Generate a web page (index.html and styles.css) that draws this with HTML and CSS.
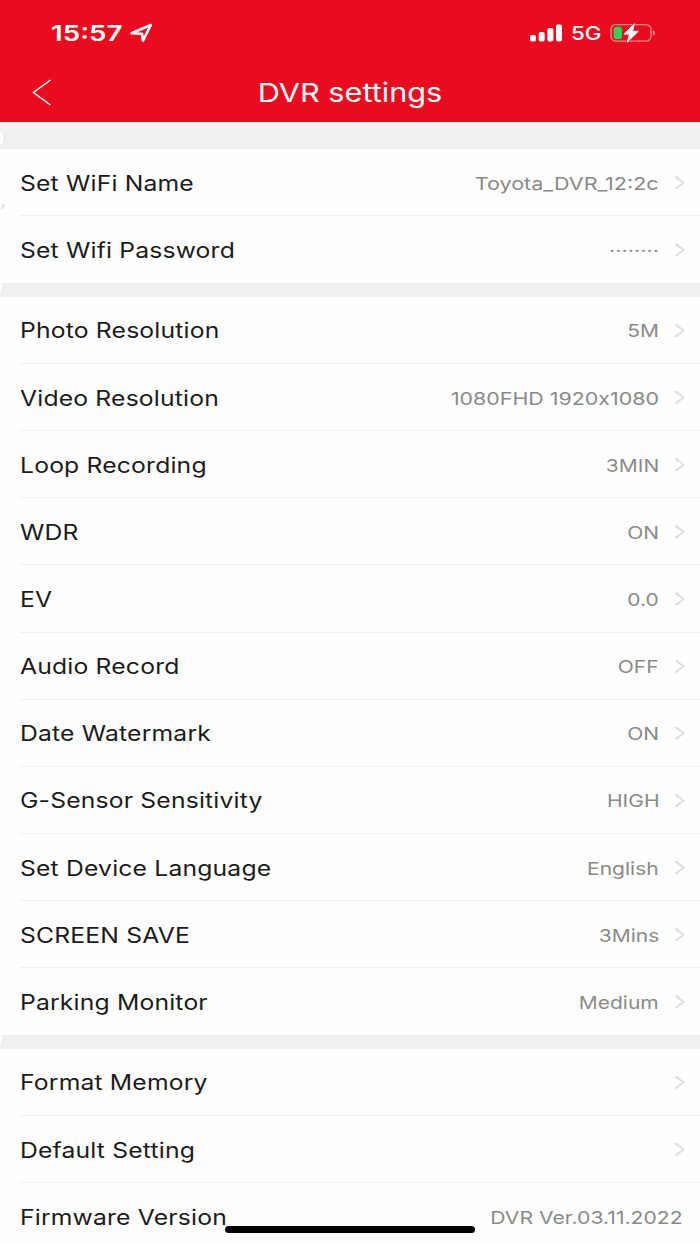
FILE: index.html
```html
<!DOCTYPE html>
<html lang="en">
<head>
    <meta charset="UTF-8">
    <meta name="viewport" content="width=device-width, initial-scale=1.0">
    <title>DVR settings</title>
    <link rel="stylesheet" href="styles.css">
</head>
<body>

<header>
    <div class="status-bar">
        <span class="time">15:57</span>
        <svg class="location" width="24" height="20" viewBox="0 0 24 20">
            <path d="M1.6 10.3 L20.8 2 L13 17.6 L12 10.8 Z" fill="none" stroke="#fff" stroke-width="2.6" stroke-linejoin="round"/>
        </svg>
        <svg class="signal" width="33" height="18" viewBox="0 0 33 18" fill="#fff">
            <rect x="0" y="11" width="6" height="6.6" rx="2"/>
            <rect x="8.7" y="8" width="6" height="9.6" rx="2"/>
            <rect x="17.4" y="4" width="6" height="13.6" rx="2"/>
            <rect x="26" y="0.4" width="6" height="17.2" rx="2"/>
        </svg>
        <span class="network">5G</span>
        <svg class="battery" width="46" height="20" viewBox="0 0 46 20">
            <rect x="1" y="1.6" width="40" height="16.6" rx="5" fill="none" stroke="#f58a92" stroke-width="1.3"/>
            <path d="M42.8 7.2 Q45 8 45 10 Q45 12 42.8 12.8 Z" fill="#f58a92"/>
            <rect x="3.6" y="3.8" width="8.4" height="12.4" rx="3" fill="#30d158"/>
            <path d="M24.6 0.6 L13.8 11.2 H19.4 L17 19.4 L28.4 8.2 H22.6 Z" fill="#fff" stroke="#ea0c1e" stroke-width="2" paint-order="stroke"/>
            <path d="M24.6 0.6 L13.8 11.2 H19.4 L17 19.4 L28.4 8.2 H22.6 Z" fill="#fff" stroke="#fff" stroke-width="0.6"/>
        </svg>
    </div>
    <div class="nav-bar">
        <svg class="back" width="20" height="28" viewBox="0 0 20 28">
            <path d="M18.5 2 L1.5 14.5 L18.5 27" fill="none" stroke="#fff" stroke-width="1.5"/>
        </svg>
        <h1>DVR settings</h1>
    </div>
</header>

<main>
    <section>
        <div class="row"><span class="label">Set WiFi Name</span><span class="value wifi">Toyota_DVR_12:2c</span><i class="arrow"></i></div>
        <div class="row"><span class="label">Set Wifi Password</span><span class="value dots">········</span><i class="arrow"></i></div>
    </section>

    <section>
        <div class="row"><span class="label">Photo Resolution</span><span class="value">5M</span><i class="arrow"></i></div>
        <div class="row"><span class="label">Video Resolution</span><span class="value size">1080FHD 1920x1080</span><i class="arrow"></i></div>
        <div class="row"><span class="label">Loop Recording</span><span class="value">3MIN</span><i class="arrow"></i></div>
        <div class="row"><span class="label">WDR</span><span class="value">ON</span><i class="arrow"></i></div>
        <div class="row"><span class="label">EV</span><span class="value">0.0</span><i class="arrow"></i></div>
        <div class="row"><span class="label">Audio Record</span><span class="value">OFF</span><i class="arrow"></i></div>
        <div class="row"><span class="label">Date Watermark</span><span class="value">ON</span><i class="arrow"></i></div>
        <div class="row"><span class="label">G-Sensor Sensitivity</span><span class="value">HIGH</span><i class="arrow"></i></div>
        <div class="row"><span class="label">Set Device Language</span><span class="value">English</span><i class="arrow"></i></div>
        <div class="row"><span class="label">SCREEN SAVE</span><span class="value">3Mins</span><i class="arrow"></i></div>
        <div class="row"><span class="label">Parking Monitor</span><span class="value">Medium</span><i class="arrow"></i></div>
    </section>

    <section>
        <div class="row"><span class="label">Format Memory</span><i class="arrow"></i></div>
        <div class="row"><span class="label">Default Setting</span><i class="arrow"></i></div>
        <div class="row"><span class="label">Firmware Version</span><span class="value version">DVR Ver.03.11.2022</span></div>
    </section>
</main>

<div class="home-indicator"></div>

</body>
</html>
```
FILE: styles.css
```css
* {
    box-sizing: border-box;
}
body {
    font-family: Inter, 'Liberation Sans', sans-serif;
    margin: 0;
    height: 1244px;
    overflow: hidden;
    position: relative;
    background-color: #f0f0f0;
    color: #1c1c1c;
}
header {
    height: 122px;
    background-color: #ea0c1e;
    color: white;
}
.status-bar {
    display: flex;
    align-items: center;
    height: 66px;
    padding: 0 44px 0 51px;
}
.time {
    width: 79px;
    font-size: 22px;
    font-weight: 600;
    transform: scaleX(1.26);
    transform-origin: left;
}
.signal {
    margin-left: auto;
}
.network {
    width: 39px;
    margin-left: 8px;
    font-size: 19px;
    font-weight: 500;
    transform: scaleX(1.18);
    transform-origin: left;
}
.nav-bar {
    display: flex;
    align-items: center;
    height: 52px;
    padding: 0 32px;
}
h1 {
    flex: 1;
    margin: 0 20px 0 0;
    font-size: 26px;
    font-weight: 400;
    text-align: center;
    transform: scaleX(1.18);
}
main {
    padding-top: 27.2px;
}
section {
    position: relative;
    margin-bottom: 13.4px;
    background-color: #fefefe;
}
/* small light notch where the card meets the left edge */
section::before {
    content: "";
    position: absolute;
    left: 0;
    top: -13px;
    width: 3px;
    height: 8px;
    background-color: #fefefe;
    border-right: 1px solid #e2e2e2;
    border-bottom-right-radius: 3px 8px;
}
section:first-child::before {
    top: -17px;
    width: 4px;
    height: 12px;
    border-radius: 0 4px 4px 0;
}
section:first-child::after {
    content: "";
    position: absolute;
    left: 2px;
    top: 55px;
    width: 2px;
    height: 5px;
    background-color: #dedede;
    transform: skewX(-15deg);
}
.row {
    display: flex;
    align-items: center;
    height: 67.15px;
    margin-left: 20px;
    padding: 1px 15px 0 0;
    border-bottom: 1px solid #f1f1f1;
}
.row:last-child {
    border-bottom-color: transparent;
}
.label {
    font-size: 21.3px;
    letter-spacing: 0.15px;
    white-space: nowrap;
    transform: scaleX(1.16);
    transform-origin: left;
}
.value {
    margin-left: auto;
    padding-top: 1px;
    font-size: 17.8px;
    color: #8a8a8a;
    white-space: nowrap;
    transform: scaleX(1.18);
    transform-origin: right;
}
.wifi {
    transform: scaleX(1.213);
}
.dots {
    transform: scaleX(1.22);
}
/* keep the plain letter x between the digits */
.size {
    font-feature-settings: "calt" 0;
    transform: scaleX(1.203);
}
.version {
    margin-right: 2px;
    transform: scaleX(1.19);
}
.arrow {
    width: 10px;
    height: 13px;
    margin-left: auto;
    background-color: #dfdfdf;
    clip-path: polygon(0 0, 20% 0, 100% 50%, 20% 100%, 0 100%, 0 88%, 72% 50%, 0 12%);
}
.value + .arrow {
    margin-left: 16px;
}
.home-indicator {
    position: absolute;
    left: 225px;
    top: 1226px;
    width: 250px;
    height: 7px;
    border-radius: 4px;
    background-color: #000;
}
```
